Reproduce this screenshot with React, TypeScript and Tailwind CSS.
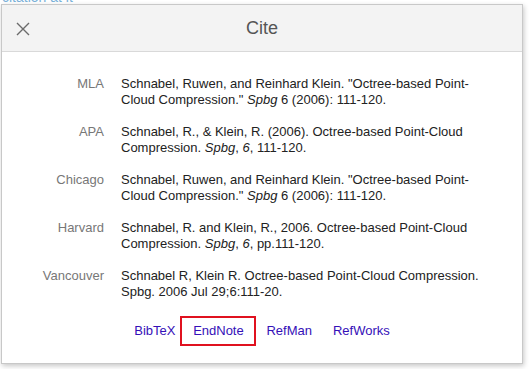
import React from "react";

const cites: { label: string; body: React.ReactNode }[] = [
  {
    label: "MLA",
    body: (
      <>
        Schnabel, Ruwen, and Reinhard Klein. "Octree-based Point-Cloud Compression." <i>Spbg</i> 6 (2006): 111-120.
      </>
    ),
  },
  {
    label: "APA",
    body: (
      <>
        Schnabel, R., &amp; Klein, R. (2006). Octree-based Point-Cloud Compression. <i>Spbg</i>, <i>6</i>, 111-120.
      </>
    ),
  },
  {
    label: "Chicago",
    body: (
      <>
        Schnabel, Ruwen, and Reinhard Klein. "Octree-based Point-Cloud Compression." <i>Spbg</i> 6 (2006): 111-120.
      </>
    ),
  },
  {
    label: "Harvard",
    body: (
      <>
        Schnabel, R. and Klein, R., 2006. Octree-based Point-Cloud Compression. <i>Spbg</i>, <i>6</i>, pp.111-120.
      </>
    ),
  },
  {
    label: "Vancouver",
    body: <>Schnabel R, Klein R. Octree-based Point-Cloud Compression. Spbg. 2006 Jul 29;6:111-20.</>,
  },
];

export default function App() {
  return (
    <div className="h-[369px] w-[530px] overflow-hidden bg-white font-['Liberation_Sans',Arial,sans-serif]">
      <div className="h-[4px] overflow-hidden">
        <div className="-mt-[10px] pl-[2px] text-[14px] leading-[14px] text-[#7ab0d8]">citation at it</div>
      </div>
      <div className="ml-[1px] flex h-[360px] w-[522px] flex-col border border-[#c8c8c8] bg-white shadow-[1px_2px_5px_rgba(0,0,0,0.22)]">
        <div className="relative flex h-[47px] shrink-0 items-center justify-center border-b border-[#d9d9d9] bg-[#f3f3f3]">
          <button className="absolute left-[14px] top-[17px] flex h-[14px] w-[14px] items-center justify-center">
            <svg width="14" height="14" viewBox="0 0 14 14">
              <path d="M1 1 L13 13 M13 1 L1 13" stroke="#6b6b6b" strokeWidth="1.4" fill="none" />
            </svg>
          </button>
          <h2 className="text-[18px] leading-none text-[#555]">Cite</h2>
        </div>

        <div className="flex flex-col gap-[16px] pt-[24px]">
          {cites.map((c) => (
            <div key={c.label} className="flex text-[13px] leading-[16px]">
              <div className="w-[102px] shrink-0 text-right text-[#777]">{c.label}</div>
              <div className="ml-[17px] w-[370px] text-[#222]">{c.body}</div>
            </div>
          ))}
        </div>

        <div className="mt-[16px] flex items-center justify-center text-[13px] leading-[16px] text-[#3510b8]">
          <a className="mr-[5px]">BibTeX</a>
          <a className="flex h-[30px] w-[76px] items-center justify-center border-2 border-[#e0111f]">EndNote</a>
          <a className="ml-[10px]">RefMan</a>
          <a className="ml-[21px]">RefWorks</a>
        </div>
      </div>
    </div>
  );
}
